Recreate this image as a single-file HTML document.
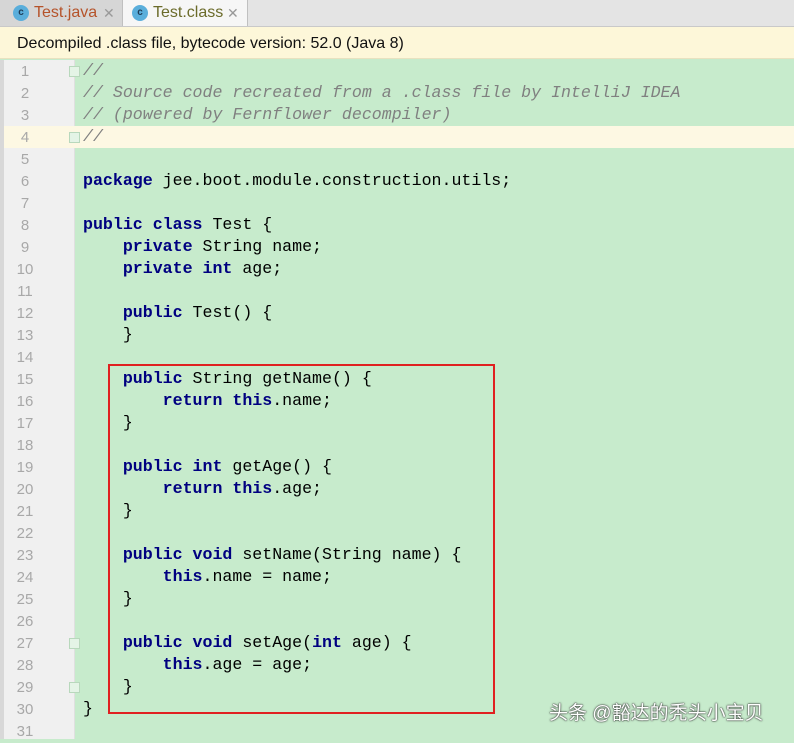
<!DOCTYPE html>
<html><head><meta charset="utf-8"><style>
body{margin:0;width:794px;height:739px;overflow:hidden;background:#c7ebcc;font-family:"Liberation Sans",sans-serif;position:relative}
.tabs{position:absolute;left:0;top:0;width:794px;height:26px;background:#e4e4e4;border-bottom:1px solid #c9c9c9}
.tab{position:absolute;top:0;height:26px;font-size:16px;line-height:26px}
.ic{position:absolute;top:5px;width:16px;height:16px;border-radius:50%;background:#5aaedb;color:#1d3b55;font-size:10px;line-height:16px;text-align:center;font-weight:bold}
.x{color:#999;font-size:14px;position:absolute;top:0}
.banner{position:absolute;left:0;top:27px;width:794px;height:32px;background:#fdf7d9;border-bottom:1px solid #e8e2c0;font-size:16px;line-height:33px;padding-left:17px;box-sizing:border-box;color:#111}
.gut{position:absolute;left:4px;top:60px;width:70px;height:679px;background:#f0f0f0;border-right:1px solid #e0e0e0}
.strip{position:absolute;left:0;top:60px;width:4px;height:679px;background:#d8d8d8}
.num{position:absolute;left:4px;width:42px;text-align:center;color:#a8a8a8;font-family:"Liberation Sans",sans-serif;font-size:15px}
.line{position:absolute;left:83px;white-space:pre;font-family:"Liberation Mono",monospace;font-size:16.6px;color:#000;line-height:22px}
.k{color:#000080;font-weight:bold}
.c{color:#808080;font-style:italic}
.cur{position:absolute;left:4px;top:126px;width:790px;height:22px;background:#fdf8e3}
.box{position:absolute;left:108px;top:364px;width:383px;height:346px;border:2px solid #e02020}
.fold{position:absolute;left:69px;width:9px;height:9px;border:1px solid #b8d8bc;background:#e4f4e6}
.wm{position:absolute;left:549px;top:698px;font-family:"Liberation Sans","Noto Sans CJK SC",sans-serif;font-size:19px;color:#fff;text-shadow:0 0 2px #333,0 0 1px #000}
</style></head><body>
<div class="tabs">
 <div class="tab" style="left:0;width:122px;background:#d6d6d6;border-right:1px solid #c0c0c0"><span class="ic" style="left:13px">c</span><span style="position:absolute;left:34px;color:#b5532a">Test.java</span><span class="x" style="left:103px">✕</span></div>
 <div class="tab" style="left:123px;width:124px;background:#f6f6f6;border-right:1px solid #c0c0c0"><span class="ic" style="left:9px">c</span><span style="position:absolute;left:30px;color:#6b6b2a">Test.class</span><span class="x" style="left:104px">✕</span></div>
</div>
<div class="banner">Decompiled .class file, bytecode version: 52.0 (Java 8)</div>
<div class="strip"></div>
<div class="gut"></div>
<div class="cur"></div>
<div class="fold" style="top:66px"></div>
<div class="fold" style="top:132px"></div>
<div class="fold" style="top:638px"></div>
<div class="fold" style="top:682px"></div>
<div id="n"></div>
<div class="line" style="top:60px"><span class="c">//</span></div>
<div class="line" style="top:82px"><span class="c">// Source code recreated from a .class file by IntelliJ IDEA</span></div>
<div class="line" style="top:104px"><span class="c">// (powered by Fernflower decompiler)</span></div>
<div class="line" style="top:126px"><span class="c">//</span></div>
<div class="line" style="top:170px"><span class="k">package</span> jee.boot.module.construction.utils;</div>
<div class="line" style="top:214px"><span class="k">public class</span> Test {</div>
<div class="line" style="top:236px">    <span class="k">private</span> String name;</div>
<div class="line" style="top:258px">    <span class="k">private int</span> age;</div>
<div class="line" style="top:302px">    <span class="k">public</span> Test() {</div>
<div class="line" style="top:324px">    }</div>
<div class="line" style="top:368px">    <span class="k">public</span> String getName() {</div>
<div class="line" style="top:390px">        <span class="k">return this</span>.name;</div>
<div class="line" style="top:412px">    }</div>
<div class="line" style="top:456px">    <span class="k">public int</span> getAge() {</div>
<div class="line" style="top:478px">        <span class="k">return this</span>.age;</div>
<div class="line" style="top:500px">    }</div>
<div class="line" style="top:544px">    <span class="k">public void</span> setName(String name) {</div>
<div class="line" style="top:566px">        <span class="k">this</span>.name = name;</div>
<div class="line" style="top:588px">    }</div>
<div class="line" style="top:632px">    <span class="k">public void</span> setAge(<span class="k">int</span> age) {</div>
<div class="line" style="top:654px">        <span class="k">this</span>.age = age;</div>
<div class="line" style="top:676px">    }</div>
<div class="line" style="top:698px">}</div>
<div class="box"></div>
<div class="wm">头条 @豁达的秃头小宝贝</div>
<script>
var h='';for(var i=1;i<=31;i++){h+='<div class="num" style="top:'+(61+(i-1)*22)+'px;line-height:22px">'+i+'</div>';}
document.getElementById('n').innerHTML=h;
</script>
</body></html>
